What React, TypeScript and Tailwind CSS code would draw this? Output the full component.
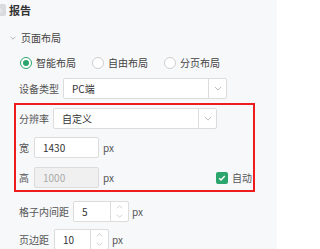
import React from 'react';

const font = { fontFamily: '"Noto Sans CJK SC", "Noto Sans", sans-serif' };

const Chevron: React.FC<{ className?: string }> = ({ className }) => (
  <svg viewBox="0 0 10 6" className={className} fill="none" stroke="currentColor" strokeWidth="1">
    <path d="M1 1l4 4 4-4" />
  </svg>
);

const Select: React.FC<{ value: string }> = ({ value }) => (
  <div className="flex h-[21px] w-[164px] shrink-0 items-stretch rounded-[2px] border border-[#dcdcdc] bg-white">
    <span className="flex flex-1 items-center pl-[8px] text-[#333]">{value}</span>
    <span className="flex w-[18px] items-center justify-center border-l border-[#dcdcdc] text-[#aaa]">
      <Chevron className="h-[5px] w-[8px]" />
    </span>
  </div>
);

const NumberInput: React.FC<{ value: string; width: string }> = ({ value, width }) => (
  <div className={`flex h-[21px] ${width} shrink-0 items-stretch rounded-[2px] border border-[#dcdcdc] bg-white`}>
    <span className="flex flex-1 items-center pl-[8px] text-[#333]">{value}</span>
    <span className="flex w-[18px] flex-col border-l border-[#dcdcdc] text-[#bbb]">
      <span className="flex flex-1 items-center justify-center">
        <Chevron className="h-[4px] w-[7px] rotate-180" />
      </span>
      <span className="flex flex-1 items-center justify-center">
        <Chevron className="h-[4px] w-[7px]" />
      </span>
    </span>
  </div>
);

const Radio: React.FC<{ label: string; checked?: boolean }> = ({ label, checked }) => (
  <div className="flex items-center gap-[4px] whitespace-nowrap">
    <span
      className={`flex h-[12px] w-[12px] items-center justify-center rounded-full border bg-white ${
        checked ? 'border-[#2aa56c]' : 'border-[#cfcfcf]'
      }`}
    >
      {checked && <span className="h-[6px] w-[6px] rounded-full bg-[#2aa56c]" />}
    </span>
    <span className="text-[#444]">{label}</span>
  </div>
);

const Label: React.FC<{ text: string; width: string }> = ({ text, width }) => (
  <span className={`${width} shrink-0 whitespace-nowrap text-[#555]`}>{text}</span>
);

export default function App() {
  return (
    <div className="h-[249px] w-[277px] overflow-hidden bg-[#f7f8fa] text-[10px] leading-none" style={font}>
      {/* header */}
      <div className="flex h-[20px] items-center">
        <span className="ml-[-6px] flex h-[12px] w-[12px] items-center justify-center rounded-[2px] bg-[#d8dadd] text-white">
          <Chevron className="h-[5px] w-[7px] -rotate-90" />
        </span>
        <span className="ml-[3px] text-[11px] font-bold text-[#333]">报告</span>
      </div>

      {/* section */}
      <div className="mt-[8px] flex h-[20px] items-center pl-[10px]">
        <Chevron className="h-[4px] w-[6px] text-[#888]" />
        <span className="ml-[5px] text-[#444]">页面布局</span>
      </div>

      <div className="mt-[5px] flex h-[20px] items-center gap-[16px] pl-[20px]">
        <Radio label="智能布局" checked />
        <Radio label="自由布局" />
        <Radio label="分页布局" />
      </div>

      <div className="mt-[5px] flex items-center pl-[19px]">
        <Label text="设备类型" width="w-[44px]" />
        <Select value="PC端" />
      </div>

      {/* highlighted block */}
      <div className="ml-[14px] mt-[4px] w-[241px] border-2 border-[#ee1c1c] pb-[2px] pl-[3px] pt-[3px]">
        <div className="flex items-center">
          <Label text="分辨率" width="w-[34px]" />
          <Select value="自定义" />
        </div>
        <div className="mt-[8px] flex items-center">
          <Label text="宽" width="w-[15px]" />
          <div className="flex h-[21px] w-[65px] items-center rounded-[2px] border border-[#dcdcdc] bg-white pl-[8px] text-[#333]">
            1430
          </div>
          <span className="ml-[4px] text-[#555]">px</span>
        </div>
        <div className="mt-[9px] flex items-center">
          <Label text="高" width="w-[15px]" />
          <div className="flex h-[21px] w-[65px] items-center rounded-[2px] border border-[#dcdcdc] bg-[#f0f0f0] pl-[8px] text-[#aaa]">
            1000
          </div>
          <span className="ml-[4px] text-[#555]">px</span>
          <div className="ml-auto mr-[1px] flex items-center gap-[4px] whitespace-nowrap">
            <span className="flex h-[12px] w-[12px] items-center justify-center rounded-[2px] bg-[#2aa56c] text-white">
              <svg viewBox="0 0 10 10" className="h-[8px] w-[8px]" fill="none" stroke="currentColor" strokeWidth="1.8">
                <path d="M1.5 5.2l2.3 2.3 4.7-5" />
              </svg>
            </span>
            <span className="text-[#555]">自动</span>
          </div>
        </div>
      </div>

      <div className="mt-[9px] flex items-center pl-[19px]">
        <Label text="格子内间距" width="w-[54px]" />
        <NumberInput value="5" width="w-[56px]" />
        <span className="ml-[3px] text-[#555]">px</span>
      </div>

      <div className="mt-[7px] flex items-center pl-[19px]">
        <Label text="页边距" width="w-[35px]" />
        <NumberInput value="10" width="w-[55px]" />
        <span className="ml-[3px] text-[#555]">px</span>
      </div>
    </div>
  );
}
